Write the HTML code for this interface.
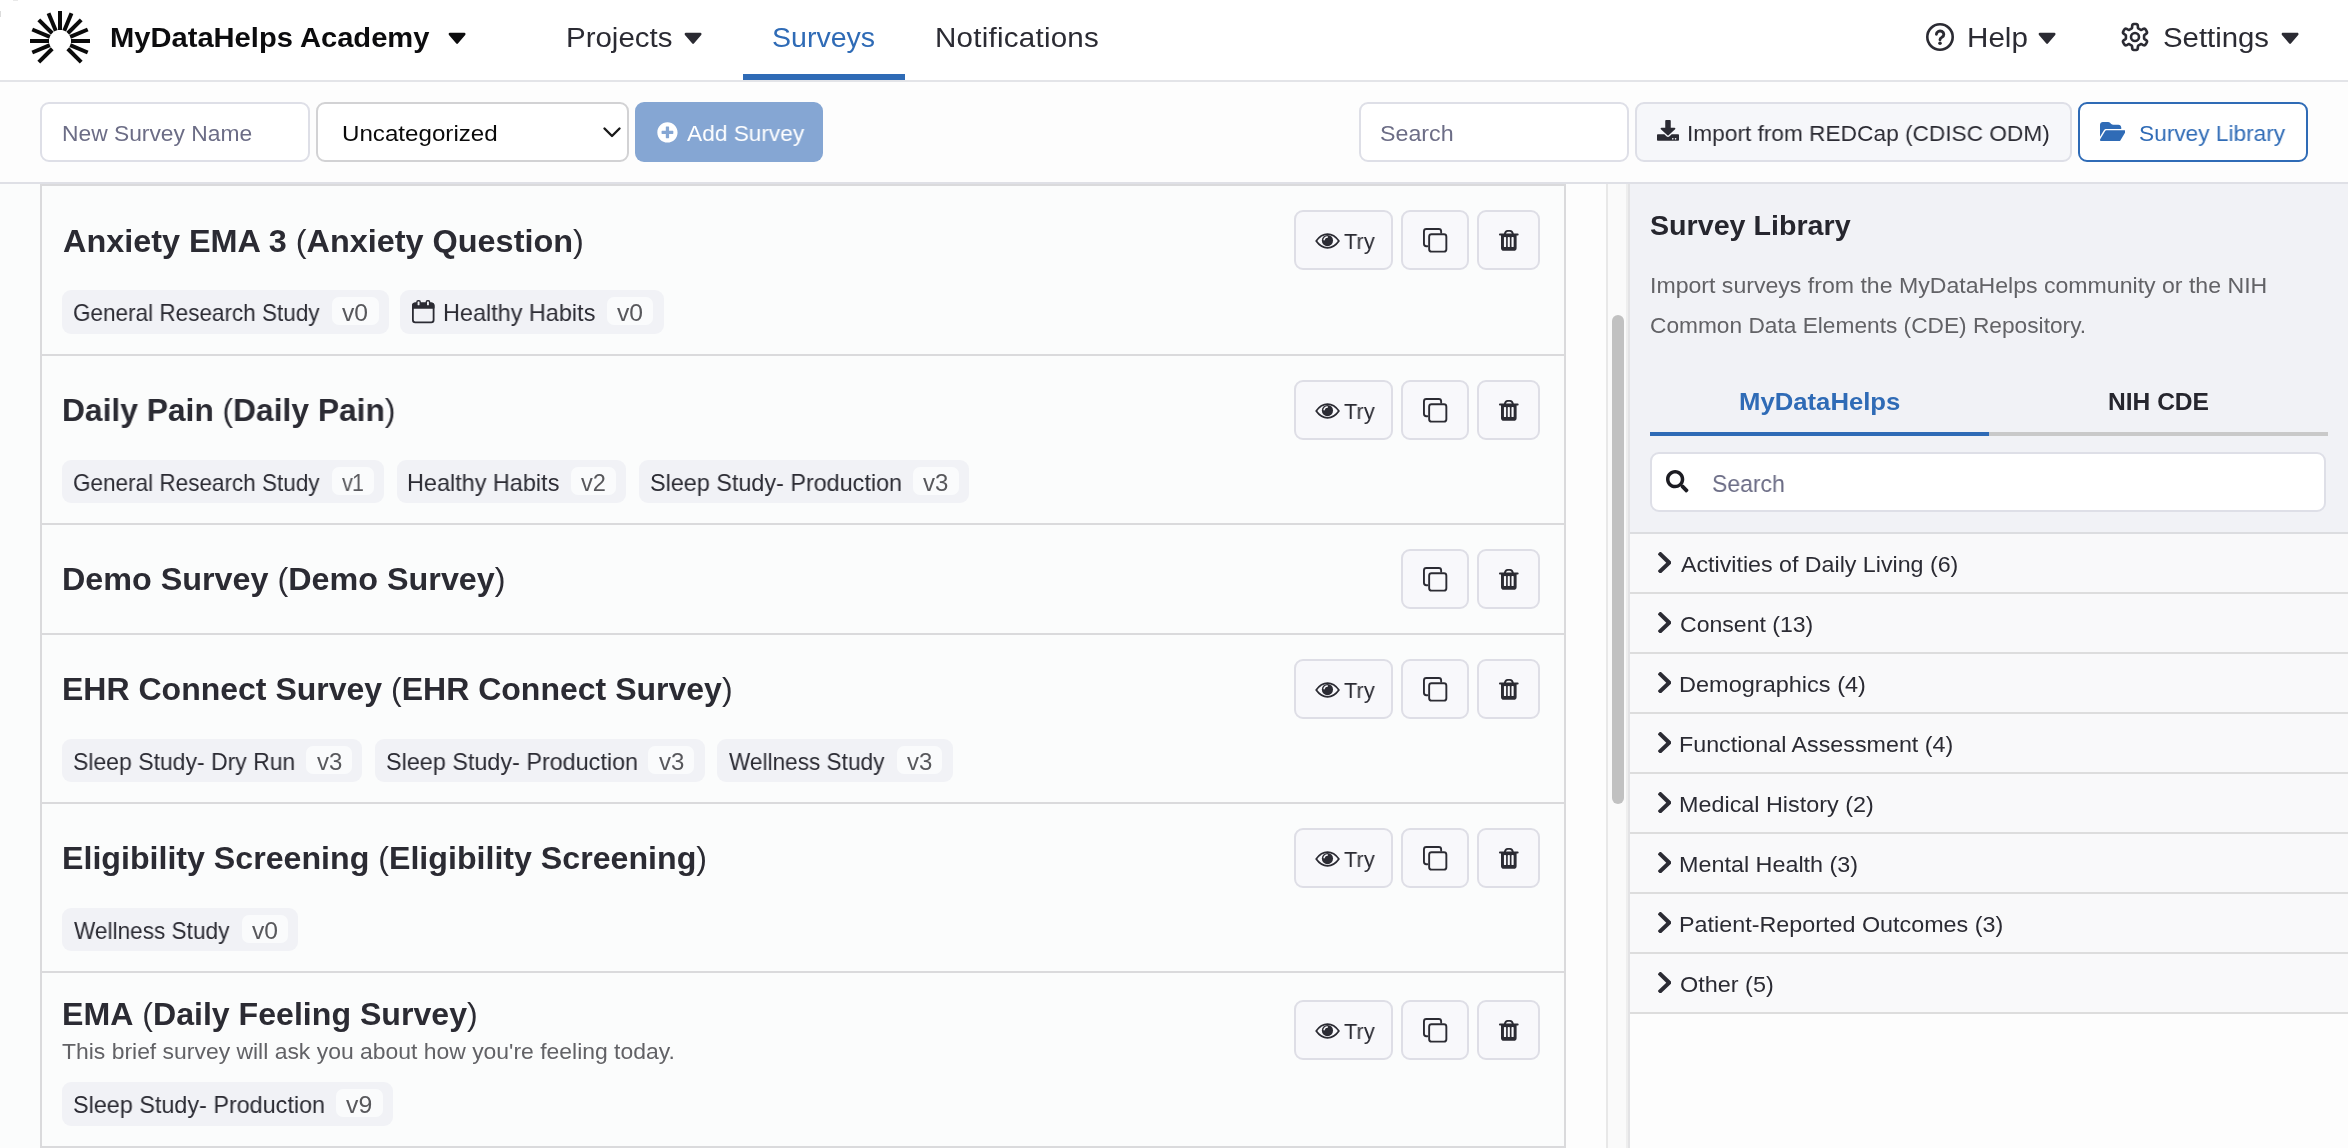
<!DOCTYPE html>
<html lang="en"><head><meta charset="utf-8"><title>Surveys - MyDataHelps Academy</title><style>html,body{margin:0;padding:0}body{width:2348px;height:1148px;position:relative;overflow:hidden;background:#fbfcfc;font-family:"Liberation Sans",sans-serif}
body>div,body>svg,body>span{position:absolute;display:block}body>span{white-space:nowrap;will-change:transform;transform-origin:0 0}b{font-weight:700}</style></head><body>
<div style="left:0px;top:0px;width:2348px;height:80px;background:#fff"></div>
<div style="left:0px;top:80px;width:2348px;height:2px;background:#e3e4e8"></div>
<div style="left:0px;top:82px;width:2348px;height:100px;background:#fdfdfd"></div>
<div style="left:0px;top:182px;width:2348px;height:2px;background:#dfe0e6"></div>
<div style="left:13px;top:0px;width:5px;height:1px;background:#e9e9e9"></div>
<div style="left:0px;top:11px;width:1px;height:6px;background:#dcdcdc"></div>
<div style="left:743px;top:74px;width:162px;height:6px;background:#2f6bb6"></div>
<svg style="left:0px;top:0px" width="120" height="80" viewBox="0 0 120 80"><g stroke="#0b0b0b" stroke-width="4" stroke-linecap="butt"><line x1="52.22" y1="48.78" x2="38.79" y2="62.21"/><line x1="49.84" y1="45.21" x2="32.28" y2="52.48"/><line x1="49.00" y1="41.00" x2="30.00" y2="41.00"/><line x1="49.84" y1="36.79" x2="32.28" y2="29.52"/><line x1="52.22" y1="33.22" x2="38.79" y2="19.79"/><line x1="55.79" y1="30.84" x2="48.52" y2="13.28"/><line x1="60.00" y1="30.00" x2="60.00" y2="11.00"/><line x1="64.21" y1="30.84" x2="71.48" y2="13.28"/><line x1="67.78" y1="33.22" x2="81.21" y2="19.79"/><line x1="70.16" y1="36.79" x2="87.72" y2="29.52"/><line x1="71.00" y1="41.00" x2="90.00" y2="41.00"/><line x1="70.16" y1="45.21" x2="87.72" y2="52.48"/><line x1="67.78" y1="48.78" x2="81.21" y2="62.21"/></g></svg>
<svg style="left:448px;top:20.25px" width="18.2" height="34" viewBox="0 0 320 512" preserveAspectRatio="none" fill="#0c0c0e"><path d="M31.3 192h257.3c17.8 0 26.7 21.5 14.1 34.1L174.1 354.8c-7.8 7.8-20.5 7.8-28.3 0L17.2 226.1C4.6 213.500 13.500 192 31.300 192z"/></svg>
<svg style="left:683.8px;top:20.25px" width="18.2" height="34" viewBox="0 0 320 512" preserveAspectRatio="none" fill="#2b2b33"><path d="M31.3 192h257.3c17.8 0 26.7 21.5 14.1 34.1L174.1 354.8c-7.8 7.8-20.5 7.8-28.3 0L17.2 226.1C4.6 213.500 13.500 192 31.300 192z"/></svg>
<svg style="left:2038px;top:20.25px" width="18.2" height="34" viewBox="0 0 320 512" preserveAspectRatio="none" fill="#2b2b33"><path d="M31.3 192h257.3c17.8 0 26.7 21.5 14.1 34.1L174.1 354.8c-7.8 7.8-20.5 7.8-28.3 0L17.2 226.1C4.6 213.500 13.500 192 31.300 192z"/></svg>
<svg style="left:2281px;top:20.25px" width="18.2" height="34" viewBox="0 0 320 512" preserveAspectRatio="none" fill="#2b2b33"><path d="M31.3 192h257.3c17.8 0 26.7 21.5 14.1 34.1L174.1 354.8c-7.8 7.8-20.5 7.8-28.3 0L17.2 226.1C4.6 213.500 13.500 192 31.300 192z"/></svg>
<svg style="left:1924px;top:21px" width="32" height="32" viewBox="0 0 32 32"><circle cx="16" cy="16" r="12.7" fill="none" stroke="#2b2b33" stroke-width="2.6"/><path d="M12.400 13.300a3.700 3.300 0 1 1 5.600 2.800c-1.400 0.900-2 1.500-2 2.700" fill="none" stroke="#2b2b33" stroke-width="2.900" stroke-linecap="round"/><circle cx="16" cy="22.300" r="1.800" fill="#2b2b33"/></svg>
<svg style="left:2119px;top:21px" width="32" height="32" viewBox="0 0 32 32"><path d="M25.10 16.00 L25.10 15.76 L25.09 15.52 L25.08 15.29 L25.07 15.05 L25.07 14.81 L25.09 14.56 L25.18 14.30 L25.41 14.00 L25.91 13.62 L26.67 13.14 L27.42 12.62 L27.87 12.14 L28.04 11.74 L28.04 11.38 L27.97 11.04 L27.86 10.72 L27.73 10.41 L27.58 10.10 L27.42 9.80 L27.26 9.50 L27.08 9.21 L26.90 8.92 L26.71 8.64 L26.50 8.37 L26.28 8.11 L26.02 7.88 L25.71 7.71 L25.27 7.65 L24.64 7.80 L23.81 8.19 L23.02 8.61 L22.44 8.85 L22.06 8.90 L21.79 8.85 L21.57 8.74 L21.36 8.62 L21.16 8.49 L20.96 8.37 L20.76 8.24 L20.55 8.12 L20.34 8.00 L20.13 7.89 L19.92 7.78 L19.71 7.67 L19.50 7.55 L19.30 7.41 L19.11 7.20 L18.97 6.85 L18.89 6.23 L18.86 5.33 L18.78 4.42 L18.59 3.79 L18.33 3.45 L18.02 3.26 L17.69 3.16 L17.36 3.09 L17.02 3.05 L16.68 3.02 L16.34 3.01 L16.00 3.00 L15.66 3.01 L15.32 3.02 L14.98 3.05 L14.64 3.09 L14.31 3.16 L13.98 3.26 L13.67 3.45 L13.41 3.79 L13.22 4.42 L13.14 5.33 L13.11 6.23 L13.03 6.85 L12.89 7.20 L12.70 7.41 L12.50 7.55 L12.29 7.67 L12.08 7.78 L11.87 7.89 L11.66 8.00 L11.45 8.12 L11.24 8.24 L11.04 8.37 L10.84 8.49 L10.64 8.62 L10.43 8.74 L10.21 8.85 L9.94 8.90 L9.56 8.85 L8.98 8.61 L8.19 8.19 L7.36 7.80 L6.73 7.65 L6.29 7.71 L5.98 7.88 L5.72 8.11 L5.50 8.37 L5.29 8.64 L5.10 8.92 L4.92 9.21 L4.74 9.50 L4.58 9.80 L4.42 10.10 L4.27 10.41 L4.14 10.72 L4.03 11.04 L3.96 11.38 L3.96 11.74 L4.13 12.14 L4.58 12.62 L5.33 13.14 L6.09 13.62 L6.59 14.00 L6.82 14.30 L6.91 14.56 L6.93 14.81 L6.93 15.05 L6.92 15.29 L6.91 15.52 L6.90 15.76 L6.90 16.00 L6.90 16.24 L6.91 16.48 L6.92 16.71 L6.93 16.95 L6.93 17.19 L6.91 17.44 L6.82 17.70 L6.59 18.00 L6.09 18.38 L5.33 18.86 L4.58 19.38 L4.13 19.86 L3.96 20.26 L3.96 20.62 L4.03 20.96 L4.14 21.28 L4.27 21.59 L4.42 21.90 L4.58 22.20 L4.74 22.50 L4.92 22.79 L5.10 23.08 L5.29 23.36 L5.50 23.63 L5.72 23.89 L5.98 24.12 L6.29 24.29 L6.73 24.35 L7.36 24.20 L8.19 23.81 L8.98 23.39 L9.56 23.15 L9.94 23.10 L10.21 23.15 L10.43 23.26 L10.64 23.38 L10.84 23.51 L11.04 23.63 L11.24 23.76 L11.45 23.88 L11.66 24.00 L11.87 24.11 L12.08 24.22 L12.29 24.33 L12.50 24.45 L12.70 24.59 L12.89 24.80 L13.03 25.15 L13.11 25.77 L13.14 26.67 L13.22 27.58 L13.41 28.21 L13.67 28.55 L13.98 28.74 L14.31 28.84 L14.64 28.91 L14.98 28.95 L15.32 28.98 L15.66 28.99 L16.00 29.00 L16.34 28.99 L16.68 28.98 L17.02 28.95 L17.36 28.91 L17.69 28.84 L18.02 28.74 L18.33 28.55 L18.59 28.21 L18.78 27.58 L18.86 26.67 L18.89 25.77 L18.97 25.15 L19.11 24.80 L19.30 24.59 L19.50 24.45 L19.71 24.33 L19.92 24.22 L20.13 24.11 L20.34 24.00 L20.55 23.88 L20.76 23.76 L20.96 23.63 L21.16 23.51 L21.36 23.38 L21.57 23.26 L21.79 23.15 L22.06 23.10 L22.44 23.15 L23.02 23.39 L23.81 23.81 L24.64 24.20 L25.27 24.35 L25.71 24.29 L26.02 24.12 L26.28 23.89 L26.50 23.63 L26.71 23.36 L26.90 23.08 L27.08 22.79 L27.26 22.50 L27.42 22.20 L27.58 21.90 L27.73 21.59 L27.86 21.28 L27.97 20.96 L28.04 20.62 L28.04 20.26 L27.87 19.86 L27.42 19.38 L26.67 18.86 L25.91 18.38 L25.41 18.00 L25.18 17.70 L25.09 17.44 L25.07 17.19 L25.07 16.95 L25.08 16.71 L25.09 16.48 L25.10 16.24Z" fill="none" stroke="#2b2b33" stroke-width="2.600" stroke-linejoin="round"/><circle cx="16" cy="16" r="4" fill="none" stroke="#2b2b33" stroke-width="2.600"/></svg>
<div style="left:40px;top:102px;width:270px;height:60px;border:2px solid #dedfe7;border-radius:9px;box-sizing:border-box;background:#fff"></div>
<div style="left:316px;top:102px;width:313px;height:60px;border:2px solid #d2d2d4;border-radius:9px;box-sizing:border-box;background:#fff"></div>
<svg style="left:602px;top:124px" width="20" height="16" viewBox="0 0 20 16"><path d="M2.500 4.500L10 12l7.500-7.500" fill="none" stroke="#1a1a1a" stroke-width="2.400" stroke-linecap="round" stroke-linejoin="round"/></svg>
<div style="left:635px;top:102px;width:188px;height:60px;background:#85a6d3;border-radius:9px"></div>
<svg style="left:656.9px;top:122.1px" width="20.9" height="20.9" viewBox="0 0 512 512" preserveAspectRatio="xMidYMid meet" fill="#fff"><path d="M256 8C119 8 8 119 8 256s111 248 248 248 248-111 248-248S393 8 256 8zm144 276c0 6.600-5.400 12-12 12h-92v92c0 6.600-5.400 12-12 12h-56c-6.600 0-12-5.400-12-12v-92h-92c-6.600 0-12-5.400-12-12v-56c0-6.600 5.400-12 12-12h92v-92c0-6.600 5.400-12 12-12h56c6.600 0 12 5.400 12 12v92h92c6.600 0 12 5.400 12 12v56z"/></svg>
<div style="left:1359px;top:102px;width:270px;height:60px;border:2px solid #dedfe7;border-radius:9px;box-sizing:border-box;background:#fff"></div>
<div style="left:1635px;top:102px;width:437px;height:60px;border:2px solid #dedfe7;border-radius:9px;box-sizing:border-box;background:#f6f7fa"></div>
<svg style="left:1657.1px;top:120.1px" width="22" height="20.8" viewBox="0 0 512 512" preserveAspectRatio="none" fill="#2b2b33"><path d="M216 0h80c13.300 0 24 10.700 24 24v168h87.700c17.800 0 26.700 21.500 14.100 34.100L269.700 378.300c-7.500 7.500-19.800 7.500-27.300 0L90.100 226.100c-12.600-12.600-3.700-34.100 14.100-34.100H192V24c0-13.300 10.700-24 24-24zm296 376v112c0 13.300-10.700 24-24 24H24c-13.300 0-24-10.700-24-24V376c0-13.300 10.700-24 24-24h146.700l49 49c20.100 20.100 52.500 20.100 72.600 0l49-49H488c13.300 0 24 10.700 24 24zm-124 88c0-11-9-20-20-20s-20 9-20 20 9 20 20 20 20-9 20-20zm64 0c0-11-9-20-20-20s-20 9-20 20 9 20 20 20 20-9 20-20z"/></svg>
<div style="left:2078px;top:102px;width:230px;height:60px;border:2px solid #2f6bb6;border-radius:9px;box-sizing:border-box;background:#fff"></div>
<svg style="left:2099.6px;top:121.8px" width="25.5" height="19.3" viewBox="0 32 576 448" preserveAspectRatio="none" fill="#2f6bb6"><path d="M88.700 223.800L0 375.800V96C0 60.700 28.700 32 64 32H181.500c17 0 33.300 6.700 45.300 18.700l26.500 26.500c12 12 28.300 18.700 45.300 18.700H416c35.300 0 64 28.700 64 64v32H144c-22.800 0-43.800 12.100-55.300 31.800zm27.600 16.100C122.100 230 132.600 224 144 224H544c11.500 0 22 6.100 27.700 16.100s5.700 22.200-.1 32.100l-112 192C453.900 474 443.400 480 432 480H32c-11.500 0-22-6.100-27.700-16.100s-5.700-22.200.1-32.100l112-192z"/></svg>
<div style="left:0px;top:184px;width:2348px;height:964px;background:#fbfcfc"></div>
<div style="left:40px;top:184px;width:1526px;height:2px;background:#dadadc"></div>
<div style="left:40px;top:184px;width:2px;height:964px;background:#dadadc"></div>
<div style="left:1564px;top:184px;width:2px;height:964px;background:#dadadc"></div>
<div style="left:1566px;top:184px;width:40px;height:964px;background:#fdfdfd"></div>
<div style="left:1606px;top:184px;width:2px;height:964px;background:#e8e8e8"></div>
<div style="left:1608px;top:184px;width:18px;height:964px;background:#fafafa"></div>
<div style="left:1612px;top:315px;width:12px;height:489px;background:#c1c1c1;border-radius:6px"></div>
<div style="left:1626px;top:184px;width:2px;height:964px;background:#eeeeee"></div>
<div style="left:1628px;top:184px;width:2px;height:964px;background:#e3e3e5"></div>
<div style="left:1630px;top:184px;width:718px;height:348px;background:#f1f2f6"></div>
<div style="left:1630px;top:532px;width:718px;height:2px;background:#dcdde0"></div>
<div style="left:1630px;top:1014px;width:718px;height:134px;background:#fdfdfd"></div>
<div style="left:1630px;top:534px;width:718px;height:58px;background:#f9f9fa"></div>
<div style="left:1630px;top:592px;width:718px;height:2px;background:#dddddd"></div>
<svg style="left:1657.9px;top:552px" width="13.6" height="21.3" viewBox="27.500 37.600 265 436.800" preserveAspectRatio="none" fill="#2b2b33"><path d="M285.476 272.971L91.132 467.314c-9.373 9.373-24.569 9.373-33.941 0l-22.667-22.667c-9.357-9.357-9.375-24.522-.04-33.901L188.505 256 34.484 101.255c-9.335-9.379-9.317-24.544.04-33.901l22.667-22.667c9.373-9.373 24.569-9.373 33.941 0L285.475 239.030c9.373 9.372 9.373 24.568.001 33.941z"/></svg>
<div style="left:1630px;top:594px;width:718px;height:58px;background:#f9f9fa"></div>
<div style="left:1630px;top:652px;width:718px;height:2px;background:#dddddd"></div>
<svg style="left:1657.9px;top:612px" width="13.6" height="21.3" viewBox="27.500 37.600 265 436.800" preserveAspectRatio="none" fill="#2b2b33"><path d="M285.476 272.971L91.132 467.314c-9.373 9.373-24.569 9.373-33.941 0l-22.667-22.667c-9.357-9.357-9.375-24.522-.04-33.901L188.505 256 34.484 101.255c-9.335-9.379-9.317-24.544.04-33.901l22.667-22.667c9.373-9.373 24.569-9.373 33.941 0L285.475 239.030c9.373 9.372 9.373 24.568.001 33.941z"/></svg>
<div style="left:1630px;top:654px;width:718px;height:58px;background:#f9f9fa"></div>
<div style="left:1630px;top:712px;width:718px;height:2px;background:#dddddd"></div>
<svg style="left:1657.9px;top:672px" width="13.6" height="21.3" viewBox="27.500 37.600 265 436.800" preserveAspectRatio="none" fill="#2b2b33"><path d="M285.476 272.971L91.132 467.314c-9.373 9.373-24.569 9.373-33.941 0l-22.667-22.667c-9.357-9.357-9.375-24.522-.04-33.901L188.505 256 34.484 101.255c-9.335-9.379-9.317-24.544.04-33.901l22.667-22.667c9.373-9.373 24.569-9.373 33.941 0L285.475 239.030c9.373 9.372 9.373 24.568.001 33.941z"/></svg>
<div style="left:1630px;top:714px;width:718px;height:58px;background:#f9f9fa"></div>
<div style="left:1630px;top:772px;width:718px;height:2px;background:#dddddd"></div>
<svg style="left:1657.9px;top:732px" width="13.6" height="21.3" viewBox="27.500 37.600 265 436.800" preserveAspectRatio="none" fill="#2b2b33"><path d="M285.476 272.971L91.132 467.314c-9.373 9.373-24.569 9.373-33.941 0l-22.667-22.667c-9.357-9.357-9.375-24.522-.04-33.901L188.505 256 34.484 101.255c-9.335-9.379-9.317-24.544.04-33.901l22.667-22.667c9.373-9.373 24.569-9.373 33.941 0L285.475 239.030c9.373 9.372 9.373 24.568.001 33.941z"/></svg>
<div style="left:1630px;top:774px;width:718px;height:58px;background:#f9f9fa"></div>
<div style="left:1630px;top:832px;width:718px;height:2px;background:#dddddd"></div>
<svg style="left:1657.9px;top:792px" width="13.6" height="21.3" viewBox="27.500 37.600 265 436.800" preserveAspectRatio="none" fill="#2b2b33"><path d="M285.476 272.971L91.132 467.314c-9.373 9.373-24.569 9.373-33.941 0l-22.667-22.667c-9.357-9.357-9.375-24.522-.04-33.901L188.505 256 34.484 101.255c-9.335-9.379-9.317-24.544.04-33.901l22.667-22.667c9.373-9.373 24.569-9.373 33.941 0L285.475 239.030c9.373 9.372 9.373 24.568.001 33.941z"/></svg>
<div style="left:1630px;top:834px;width:718px;height:58px;background:#f9f9fa"></div>
<div style="left:1630px;top:892px;width:718px;height:2px;background:#dddddd"></div>
<svg style="left:1657.9px;top:852px" width="13.6" height="21.3" viewBox="27.500 37.600 265 436.800" preserveAspectRatio="none" fill="#2b2b33"><path d="M285.476 272.971L91.132 467.314c-9.373 9.373-24.569 9.373-33.941 0l-22.667-22.667c-9.357-9.357-9.375-24.522-.04-33.901L188.505 256 34.484 101.255c-9.335-9.379-9.317-24.544.04-33.901l22.667-22.667c9.373-9.373 24.569-9.373 33.941 0L285.475 239.030c9.373 9.372 9.373 24.568.001 33.941z"/></svg>
<div style="left:1630px;top:894px;width:718px;height:58px;background:#f9f9fa"></div>
<div style="left:1630px;top:952px;width:718px;height:2px;background:#dddddd"></div>
<svg style="left:1657.9px;top:912px" width="13.6" height="21.3" viewBox="27.500 37.600 265 436.800" preserveAspectRatio="none" fill="#2b2b33"><path d="M285.476 272.971L91.132 467.314c-9.373 9.373-24.569 9.373-33.941 0l-22.667-22.667c-9.357-9.357-9.375-24.522-.04-33.901L188.505 256 34.484 101.255c-9.335-9.379-9.317-24.544.04-33.901l22.667-22.667c9.373-9.373 24.569-9.373 33.941 0L285.475 239.030c9.373 9.372 9.373 24.568.001 33.941z"/></svg>
<div style="left:1630px;top:954px;width:718px;height:58px;background:#f9f9fa"></div>
<div style="left:1630px;top:1012px;width:718px;height:2px;background:#dddddd"></div>
<svg style="left:1657.9px;top:972px" width="13.6" height="21.3" viewBox="27.500 37.600 265 436.800" preserveAspectRatio="none" fill="#2b2b33"><path d="M285.476 272.971L91.132 467.314c-9.373 9.373-24.569 9.373-33.941 0l-22.667-22.667c-9.357-9.357-9.375-24.522-.04-33.901L188.505 256 34.484 101.255c-9.335-9.379-9.317-24.544.04-33.901l22.667-22.667c9.373-9.373 24.569-9.373 33.941 0L285.475 239.030c9.373 9.372 9.373 24.568.001 33.941z"/></svg>
<div style="left:1650px;top:432px;width:339px;height:4px;background:#2f6bb6"></div>
<div style="left:1989px;top:432px;width:339px;height:4px;background:#c9c9c9"></div>
<div style="left:1650px;top:452px;width:676px;height:60px;border:2px solid #dedfe7;border-radius:9px;box-sizing:border-box;background:#fff"></div>
<svg style="left:1666px;top:470px" width="22.5" height="22.5" viewBox="0 0 512 512" preserveAspectRatio="xMidYMid meet" fill="#1c1c22"><path d="M505 442.7L405.3 343c-4.5-4.5-10.6-7-17-7H372c27.6-35.3 44-79.7 44-128C416 93.1 322.9 0 208 0S0 93.1 0 208s93.100 208 208 208c48.300 0 92.700-16.400 128-44v16.300c0 6.400 2.500 12.500 7 17l99.700 99.700c9.400 9.400 24.600 9.400 33.900 0l28.300-28.300c9.400-9.400 9.400-24.600.100-34zM208 336c-70.700 0-128-57.200-128-128 0-70.700 57.200-128 128-128 70.700 0 128 57.200 128 128 0 70.700-57.200 128-128 128z"/></svg>
<div style="left:42px;top:354px;width:1522px;height:2px;background:#dadadc"></div>
<div style="left:1294px;top:210px;width:99px;height:60px;border:2px solid #dedee6;border-radius:9px;box-sizing:border-box;background:#f8f8fb"></div>
<svg style="left:1308px;top:222px" width="40" height="36" viewBox="0 0 40 36"><path d="M8.200 19C11.300 14.600 15 12.150 19.550 12.150S27.800 14.600 30.900 19C27.800 23.400 24.100 25.800 19.550 25.800S11.300 23.400 8.200 19Z" fill="none" stroke="#2b2b33" stroke-width="1.750" stroke-linejoin="round"/><circle cx="19.450" cy="18.550" r="5.600" fill="#2b2b33"/><path d="M16.100 17.700A3.500 3.500 0 0 1 19.300 14.950" fill="none" stroke="#f8f8fb" stroke-width="1.500" stroke-linecap="round"/></svg>
<div style="left:1401px;top:210px;width:68px;height:60px;border:2px solid #dedee6;border-radius:9px;box-sizing:border-box;background:#f8f8fb"></div>
<svg style="left:1415px;top:222px" width="40" height="36" viewBox="0 0 40 36"><g fill="none" stroke="#2b2b33" stroke-width="1.900" stroke-linecap="round" stroke-linejoin="round"><path d="M12.400 24.250H11.350a2.400 2.400 0 0 1-2.400-2.400V9.450a2.400 2.400 0 0 1 2.400-2.400H23.750a2.400 2.400 0 0 1 2.400 2.400V10.700"/><rect x="14.150" y="12.250" width="17.200" height="17.400" rx="2.400"/></g></svg>
<div style="left:1477px;top:210px;width:63px;height:60px;border:2px solid #dedee6;border-radius:9px;box-sizing:border-box;background:#f8f8fb"></div>
<svg style="left:1490px;top:222px" width="40" height="36" viewBox="0 0 40 36"><path d="M11 12.500H26.600V25.900a2.800 2.800 0 0 1-2.800 2.800H13.800a2.800 2.800 0 0 1-2.800-2.800Z" fill="#2b2b33"/><g fill="#f8f8fb"><rect x="13.950" y="15" width="2.150" height="10.100" rx="0.700"/><rect x="17.750" y="15" width="2.100" height="10.100" rx="0.700"/><rect x="21.500" y="15" width="2.150" height="10.100" rx="0.700"/></g><g fill="none" stroke="#2b2b33" stroke-width="1.900" stroke-linecap="round"><path d="M9.900 12.450H27.700"/><path d="M14.800 12.200C15.300 9.300 16.200 8.900 17.700 8.900H20C21.500 8.900 22.400 9.300 22.900 12.200"/></g></svg>
<div style="left:62.0px;top:290px;width:326.5px;height:43.5px;background:#f1f2f6;border-radius:9px"></div>
<div style="left:332.0px;top:297px;width:46.5px;height:28px;background:#fafbfc;border-radius:7px"></div>
<div style="left:400.0px;top:290px;width:263.5px;height:43.5px;background:#f1f2f6;border-radius:9px"></div>
<svg style="left:410.4px;top:297.6px" width="26" height="28" viewBox="0 0 26 28"><rect x="2.900" y="5.400" width="20.700" height="18.900" rx="2.300" fill="none" stroke="#2b2b33" stroke-width="1.800"/><path d="M2.900 9.800V7.700a2.300 2.300 0 0 1 2.300-2.300H21.300a2.300 2.300 0 0 1 2.300 2.300V9.800Z" fill="#2b2b33" stroke="#2b2b33" stroke-width="1.800" stroke-linejoin="round"/><g fill="#f1f2f6" stroke="#2b2b33" stroke-width="1.400"><rect x="6.900" y="2.700" width="3.300" height="5.300" rx="1.200"/><rect x="16.300" y="2.700" width="3.300" height="5.300" rx="1.200"/></g></svg>
<div style="left:606.5px;top:297px;width:46.5px;height:28px;background:#fafbfc;border-radius:7px"></div>
<div style="left:42px;top:523px;width:1522px;height:2px;background:#dadadc"></div>
<div style="left:1294px;top:380px;width:99px;height:60px;border:2px solid #dedee6;border-radius:9px;box-sizing:border-box;background:#f8f8fb"></div>
<svg style="left:1308px;top:392px" width="40" height="36" viewBox="0 0 40 36"><path d="M8.200 19C11.300 14.600 15 12.150 19.550 12.150S27.800 14.600 30.900 19C27.800 23.400 24.100 25.800 19.550 25.800S11.300 23.400 8.200 19Z" fill="none" stroke="#2b2b33" stroke-width="1.750" stroke-linejoin="round"/><circle cx="19.450" cy="18.550" r="5.600" fill="#2b2b33"/><path d="M16.100 17.700A3.500 3.500 0 0 1 19.300 14.950" fill="none" stroke="#f8f8fb" stroke-width="1.500" stroke-linecap="round"/></svg>
<div style="left:1401px;top:380px;width:68px;height:60px;border:2px solid #dedee6;border-radius:9px;box-sizing:border-box;background:#f8f8fb"></div>
<svg style="left:1415px;top:392px" width="40" height="36" viewBox="0 0 40 36"><g fill="none" stroke="#2b2b33" stroke-width="1.900" stroke-linecap="round" stroke-linejoin="round"><path d="M12.400 24.250H11.350a2.400 2.400 0 0 1-2.400-2.400V9.450a2.400 2.400 0 0 1 2.400-2.400H23.750a2.400 2.400 0 0 1 2.400 2.400V10.700"/><rect x="14.150" y="12.250" width="17.200" height="17.400" rx="2.400"/></g></svg>
<div style="left:1477px;top:380px;width:63px;height:60px;border:2px solid #dedee6;border-radius:9px;box-sizing:border-box;background:#f8f8fb"></div>
<svg style="left:1490px;top:392px" width="40" height="36" viewBox="0 0 40 36"><path d="M11 12.500H26.600V25.900a2.800 2.800 0 0 1-2.800 2.800H13.800a2.800 2.800 0 0 1-2.800-2.800Z" fill="#2b2b33"/><g fill="#f8f8fb"><rect x="13.950" y="15" width="2.150" height="10.100" rx="0.700"/><rect x="17.750" y="15" width="2.100" height="10.100" rx="0.700"/><rect x="21.500" y="15" width="2.150" height="10.100" rx="0.700"/></g><g fill="none" stroke="#2b2b33" stroke-width="1.900" stroke-linecap="round"><path d="M9.900 12.450H27.700"/><path d="M14.800 12.200C15.300 9.300 16.200 8.900 17.700 8.900H20C21.500 8.900 22.400 9.300 22.900 12.200"/></g></svg>
<div style="left:62.0px;top:459.5px;width:322.0px;height:43.5px;background:#f1f2f6;border-radius:9px"></div>
<div style="left:332.0px;top:466.5px;width:42.0px;height:28px;background:#fafbfc;border-radius:7px"></div>
<div style="left:397.0px;top:459.5px;width:229.0px;height:43.5px;background:#f1f2f6;border-radius:9px"></div>
<div style="left:570.5px;top:466.5px;width:45.0px;height:28px;background:#fafbfc;border-radius:7px"></div>
<div style="left:639.0px;top:459.5px;width:330.0px;height:43.5px;background:#f1f2f6;border-radius:9px"></div>
<div style="left:913.0px;top:466.5px;width:45.5px;height:28px;background:#fafbfc;border-radius:7px"></div>
<div style="left:42px;top:633px;width:1522px;height:2px;background:#dadadc"></div>
<div style="left:1401px;top:549px;width:68px;height:60px;border:2px solid #dedee6;border-radius:9px;box-sizing:border-box;background:#f8f8fb"></div>
<svg style="left:1415px;top:561px" width="40" height="36" viewBox="0 0 40 36"><g fill="none" stroke="#2b2b33" stroke-width="1.900" stroke-linecap="round" stroke-linejoin="round"><path d="M12.400 24.250H11.350a2.400 2.400 0 0 1-2.400-2.400V9.450a2.400 2.400 0 0 1 2.400-2.400H23.750a2.400 2.400 0 0 1 2.400 2.400V10.700"/><rect x="14.150" y="12.250" width="17.200" height="17.400" rx="2.400"/></g></svg>
<div style="left:1477px;top:549px;width:63px;height:60px;border:2px solid #dedee6;border-radius:9px;box-sizing:border-box;background:#f8f8fb"></div>
<svg style="left:1490px;top:561px" width="40" height="36" viewBox="0 0 40 36"><path d="M11 12.500H26.600V25.900a2.800 2.800 0 0 1-2.800 2.800H13.800a2.800 2.800 0 0 1-2.800-2.800Z" fill="#2b2b33"/><g fill="#f8f8fb"><rect x="13.950" y="15" width="2.150" height="10.100" rx="0.700"/><rect x="17.750" y="15" width="2.100" height="10.100" rx="0.700"/><rect x="21.500" y="15" width="2.150" height="10.100" rx="0.700"/></g><g fill="none" stroke="#2b2b33" stroke-width="1.900" stroke-linecap="round"><path d="M9.900 12.450H27.700"/><path d="M14.800 12.200C15.300 9.300 16.200 8.900 17.700 8.900H20C21.500 8.900 22.400 9.300 22.900 12.200"/></g></svg>
<div style="left:42px;top:802px;width:1522px;height:2px;background:#dadadc"></div>
<div style="left:1294px;top:659px;width:99px;height:60px;border:2px solid #dedee6;border-radius:9px;box-sizing:border-box;background:#f8f8fb"></div>
<svg style="left:1308px;top:671px" width="40" height="36" viewBox="0 0 40 36"><path d="M8.200 19C11.300 14.600 15 12.150 19.550 12.150S27.800 14.600 30.900 19C27.800 23.400 24.100 25.800 19.550 25.800S11.300 23.400 8.200 19Z" fill="none" stroke="#2b2b33" stroke-width="1.750" stroke-linejoin="round"/><circle cx="19.450" cy="18.550" r="5.600" fill="#2b2b33"/><path d="M16.100 17.700A3.500 3.500 0 0 1 19.300 14.950" fill="none" stroke="#f8f8fb" stroke-width="1.500" stroke-linecap="round"/></svg>
<div style="left:1401px;top:659px;width:68px;height:60px;border:2px solid #dedee6;border-radius:9px;box-sizing:border-box;background:#f8f8fb"></div>
<svg style="left:1415px;top:671px" width="40" height="36" viewBox="0 0 40 36"><g fill="none" stroke="#2b2b33" stroke-width="1.900" stroke-linecap="round" stroke-linejoin="round"><path d="M12.400 24.250H11.350a2.400 2.400 0 0 1-2.400-2.400V9.450a2.400 2.400 0 0 1 2.400-2.400H23.750a2.400 2.400 0 0 1 2.400 2.400V10.700"/><rect x="14.150" y="12.250" width="17.200" height="17.400" rx="2.400"/></g></svg>
<div style="left:1477px;top:659px;width:63px;height:60px;border:2px solid #dedee6;border-radius:9px;box-sizing:border-box;background:#f8f8fb"></div>
<svg style="left:1490px;top:671px" width="40" height="36" viewBox="0 0 40 36"><path d="M11 12.500H26.600V25.900a2.800 2.800 0 0 1-2.800 2.800H13.800a2.800 2.800 0 0 1-2.800-2.800Z" fill="#2b2b33"/><g fill="#f8f8fb"><rect x="13.950" y="15" width="2.150" height="10.100" rx="0.700"/><rect x="17.750" y="15" width="2.100" height="10.100" rx="0.700"/><rect x="21.500" y="15" width="2.150" height="10.100" rx="0.700"/></g><g fill="none" stroke="#2b2b33" stroke-width="1.900" stroke-linecap="round"><path d="M9.900 12.450H27.700"/><path d="M14.800 12.200C15.300 9.300 16.200 8.900 17.700 8.900H20C21.500 8.900 22.400 9.300 22.900 12.200"/></g></svg>
<div style="left:62.0px;top:738.5px;width:300.0px;height:43.5px;background:#f1f2f6;border-radius:9px"></div>
<div style="left:306.0px;top:745.5px;width:45.5px;height:28px;background:#fafbfc;border-radius:7px"></div>
<div style="left:374.5px;top:738.5px;width:330.0px;height:43.5px;background:#f1f2f6;border-radius:9px"></div>
<div style="left:648.0px;top:745.5px;width:45.5px;height:28px;background:#fafbfc;border-radius:7px"></div>
<div style="left:717.0px;top:738.5px;width:235.5px;height:43.5px;background:#f1f2f6;border-radius:9px"></div>
<div style="left:896.5px;top:745.5px;width:45.5px;height:28px;background:#fafbfc;border-radius:7px"></div>
<div style="left:42px;top:971px;width:1522px;height:2px;background:#dadadc"></div>
<div style="left:1294px;top:828px;width:99px;height:60px;border:2px solid #dedee6;border-radius:9px;box-sizing:border-box;background:#f8f8fb"></div>
<svg style="left:1308px;top:840px" width="40" height="36" viewBox="0 0 40 36"><path d="M8.200 19C11.300 14.600 15 12.150 19.550 12.150S27.800 14.600 30.900 19C27.800 23.400 24.100 25.800 19.550 25.800S11.300 23.400 8.200 19Z" fill="none" stroke="#2b2b33" stroke-width="1.750" stroke-linejoin="round"/><circle cx="19.450" cy="18.550" r="5.600" fill="#2b2b33"/><path d="M16.100 17.700A3.500 3.500 0 0 1 19.300 14.950" fill="none" stroke="#f8f8fb" stroke-width="1.500" stroke-linecap="round"/></svg>
<div style="left:1401px;top:828px;width:68px;height:60px;border:2px solid #dedee6;border-radius:9px;box-sizing:border-box;background:#f8f8fb"></div>
<svg style="left:1415px;top:840px" width="40" height="36" viewBox="0 0 40 36"><g fill="none" stroke="#2b2b33" stroke-width="1.900" stroke-linecap="round" stroke-linejoin="round"><path d="M12.400 24.250H11.350a2.400 2.400 0 0 1-2.400-2.400V9.450a2.400 2.400 0 0 1 2.400-2.400H23.750a2.400 2.400 0 0 1 2.400 2.400V10.700"/><rect x="14.150" y="12.250" width="17.200" height="17.400" rx="2.400"/></g></svg>
<div style="left:1477px;top:828px;width:63px;height:60px;border:2px solid #dedee6;border-radius:9px;box-sizing:border-box;background:#f8f8fb"></div>
<svg style="left:1490px;top:840px" width="40" height="36" viewBox="0 0 40 36"><path d="M11 12.500H26.600V25.900a2.800 2.800 0 0 1-2.800 2.800H13.800a2.800 2.800 0 0 1-2.800-2.800Z" fill="#2b2b33"/><g fill="#f8f8fb"><rect x="13.950" y="15" width="2.150" height="10.100" rx="0.700"/><rect x="17.750" y="15" width="2.100" height="10.100" rx="0.700"/><rect x="21.500" y="15" width="2.150" height="10.100" rx="0.700"/></g><g fill="none" stroke="#2b2b33" stroke-width="1.900" stroke-linecap="round"><path d="M9.900 12.450H27.700"/><path d="M14.800 12.200C15.300 9.300 16.200 8.900 17.700 8.900H20C21.500 8.900 22.400 9.300 22.900 12.200"/></g></svg>
<div style="left:62.0px;top:907.5px;width:236.0px;height:43.5px;background:#f1f2f6;border-radius:9px"></div>
<div style="left:241.5px;top:914.5px;width:46.5px;height:28px;background:#fafbfc;border-radius:7px"></div>
<div style="left:42px;top:1145.5px;width:1522px;height:2px;background:#dadadc"></div>
<div style="left:1294px;top:1000px;width:99px;height:60px;border:2px solid #dedee6;border-radius:9px;box-sizing:border-box;background:#f8f8fb"></div>
<svg style="left:1308px;top:1012px" width="40" height="36" viewBox="0 0 40 36"><path d="M8.200 19C11.300 14.600 15 12.150 19.550 12.150S27.800 14.600 30.900 19C27.800 23.400 24.100 25.800 19.550 25.800S11.300 23.400 8.200 19Z" fill="none" stroke="#2b2b33" stroke-width="1.750" stroke-linejoin="round"/><circle cx="19.450" cy="18.550" r="5.600" fill="#2b2b33"/><path d="M16.100 17.700A3.500 3.500 0 0 1 19.300 14.950" fill="none" stroke="#f8f8fb" stroke-width="1.500" stroke-linecap="round"/></svg>
<div style="left:1401px;top:1000px;width:68px;height:60px;border:2px solid #dedee6;border-radius:9px;box-sizing:border-box;background:#f8f8fb"></div>
<svg style="left:1415px;top:1012px" width="40" height="36" viewBox="0 0 40 36"><g fill="none" stroke="#2b2b33" stroke-width="1.900" stroke-linecap="round" stroke-linejoin="round"><path d="M12.400 24.250H11.350a2.400 2.400 0 0 1-2.400-2.400V9.450a2.400 2.400 0 0 1 2.400-2.400H23.750a2.400 2.400 0 0 1 2.400 2.400V10.700"/><rect x="14.150" y="12.250" width="17.200" height="17.400" rx="2.400"/></g></svg>
<div style="left:1477px;top:1000px;width:63px;height:60px;border:2px solid #dedee6;border-radius:9px;box-sizing:border-box;background:#f8f8fb"></div>
<svg style="left:1490px;top:1012px" width="40" height="36" viewBox="0 0 40 36"><path d="M11 12.500H26.600V25.900a2.800 2.800 0 0 1-2.800 2.800H13.800a2.800 2.800 0 0 1-2.800-2.800Z" fill="#2b2b33"/><g fill="#f8f8fb"><rect x="13.950" y="15" width="2.150" height="10.100" rx="0.700"/><rect x="17.750" y="15" width="2.100" height="10.100" rx="0.700"/><rect x="21.500" y="15" width="2.150" height="10.100" rx="0.700"/></g><g fill="none" stroke="#2b2b33" stroke-width="1.900" stroke-linecap="round"><path d="M9.900 12.450H27.700"/><path d="M14.800 12.200C15.300 9.300 16.200 8.900 17.700 8.900H20C21.500 8.900 22.400 9.300 22.900 12.200"/></g></svg>
<div style="left:62.0px;top:1082px;width:330.5px;height:43.5px;background:#f1f2f6;border-radius:9px"></div>
<div style="left:336.0px;top:1089px;width:46.5px;height:28px;background:#fafbfc;border-radius:7px"></div>
<span style="left:109.97px;top:21.00px;font:700 28px/34px 'Liberation Sans', sans-serif;color:#0c0c0e;transform:scaleX(1.0402)">MyDataHelps Academy</span>
<span style="left:566.10px;top:20.80px;font:400 27.5px/33px 'Liberation Sans', sans-serif;color:#2b2b33;transform:scaleX(1.0719)">Projects</span>
<span style="left:772.22px;top:20.80px;font:400 27.5px/33px 'Liberation Sans', sans-serif;color:#2f6bb6;transform:scaleX(1.0371)">Surveys</span>
<span style="left:934.79px;top:21.00px;font:400 27.5px/33px 'Liberation Sans', sans-serif;letter-spacing:0.216px;color:#2b2b33;transform:scaleX(1.0750)">Notifications</span>
<span style="left:1966.89px;top:21.00px;font:400 27.5px/33px 'Liberation Sans', sans-serif;letter-spacing:0.039px;color:#2b2b33;transform:scaleX(1.0750)">Help</span>
<span style="left:2163.48px;top:21.00px;font:400 27.5px/33px 'Liberation Sans', sans-serif;color:#2b2b33;transform:scaleX(1.0670)">Settings</span>
<span style="left:61.53px;top:118.70px;font:400 22.8px/28px 'Liberation Sans', sans-serif;color:#6c6d86;transform:scaleX(1.0004)">New Survey Name</span>
<span style="left:341.73px;top:118.70px;font:400 22.8px/28px 'Liberation Sans', sans-serif;color:#0a0a0a;transform:scaleX(1.0590)">Uncategorized</span>
<span style="left:687.40px;top:118.80px;font:400 22.8px/28px 'Liberation Sans', sans-serif;color:#ffffff;transform:scaleX(0.9943)">Add Survey</span>
<span style="left:1380.38px;top:118.70px;font:400 22.8px/28px 'Liberation Sans', sans-serif;color:#6c6d86;transform:scaleX(1.0186)">Search</span>
<span style="left:1687.01px;top:118.70px;font:400 22.8px/28px 'Liberation Sans', sans-serif;color:#2b2b33;transform:scaleX(0.9944)">Import from REDCap (CDISC ODM)</span>
<span style="left:2139.01px;top:118.70px;font:400 22.8px/28px 'Liberation Sans', sans-serif;color:#2f6bb6;transform:scaleX(0.9945)">Survey Library</span>
<span style="left:1680.90px;top:549.50px;font:400 22.8px/28px 'Liberation Sans', sans-serif;color:#2b2b33;transform:scaleX(1.0181)">Activities of Daily Living (6)</span>
<span style="left:1679.89px;top:609.50px;font:400 22.8px/28px 'Liberation Sans', sans-serif;color:#2b2b33;transform:scaleX(1.0113)">Consent (13)</span>
<span style="left:1679.18px;top:669.50px;font:400 22.8px/28px 'Liberation Sans', sans-serif;color:#2b2b33;transform:scaleX(1.0315)">Demographics (4)</span>
<span style="left:1679.20px;top:729.50px;font:400 22.8px/28px 'Liberation Sans', sans-serif;color:#2b2b33;transform:scaleX(1.0208)">Functional Assessment (4)</span>
<span style="left:1679.19px;top:789.50px;font:400 22.8px/28px 'Liberation Sans', sans-serif;color:#2b2b33;transform:scaleX(1.0246)">Medical History (2)</span>
<span style="left:1679.19px;top:849.50px;font:400 22.8px/28px 'Liberation Sans', sans-serif;color:#2b2b33;transform:scaleX(1.0241)">Mental Health (3)</span>
<span style="left:1679.19px;top:909.50px;font:400 22.8px/28px 'Liberation Sans', sans-serif;color:#2b2b33;transform:scaleX(1.0237)">Patient-Reported Outcomes (3)</span>
<span style="left:1679.87px;top:969.50px;font:400 22.8px/28px 'Liberation Sans', sans-serif;color:#2b2b33;transform:scaleX(1.0274)">Other (5)</span>
<span style="left:1650.19px;top:208.20px;font:700 28.4px/35px 'Liberation Sans', sans-serif;color:#26262e;transform:scaleX(1.0088)">Survey Library</span>
<span style="left:1649.75px;top:271.70px;font:400 22.5px/27px 'Liberation Sans', sans-serif;color:#626266;transform:scaleX(1.0263)">Import surveys from the MyDataHelps community or the NIH</span>
<span style="left:1650.19px;top:311.70px;font:400 22.5px/27px 'Liberation Sans', sans-serif;color:#626266;transform:scaleX(1.0090)">Common Data Elements (CDE) Repository.</span>
<span style="left:1738.85px;top:387.20px;font:700 24.5px/30px 'Liberation Sans', sans-serif;color:#2f6bb6;transform:scaleX(1.0487)">MyDataHelps</span>
<span style="left:2108.03px;top:387.20px;font:700 24.5px/30px 'Liberation Sans', sans-serif;color:#26262e;transform:scaleX(1.0027)">NIH CDE</span>
<span style="left:1711.85px;top:469.30px;font:400 24.3px/30px 'Liberation Sans', sans-serif;color:#6c6d86;transform:scaleX(0.9457)">Search</span>
<span style="left:62.53px;top:221.90px;font:400 32px/39px 'Liberation Sans', sans-serif;color:#2b2b33;transform:scaleX(1.0123)"><b>Anxiety EMA 3</b> (<b>Anxiety Question</b>)</span>
<span style="left:1343.88px;top:226.80px;font:400 22.8px/28px 'Liberation Sans', sans-serif;color:#2b2b33;transform:scaleX(0.9568)">Try</span>
<span style="left:73.45px;top:299.30px;font:400 23.6px/29px 'Liberation Sans', sans-serif;color:#2b2b33;transform:scaleX(0.9544)">General Research Study</span>
<span style="left:342.40px;top:299.30px;font:400 23.6px/29px 'Liberation Sans', sans-serif;color:#58585c;transform:scaleX(1.0458)">v0</span>
<span style="left:443.21px;top:299.30px;font:400 23.6px/29px 'Liberation Sans', sans-serif;color:#2b2b33;transform:scaleX(0.9929)">Healthy Habits</span>
<span style="left:617.20px;top:299.30px;font:400 23.6px/29px 'Liberation Sans', sans-serif;color:#58585c;transform:scaleX(1.0458)">v0</span>
<span style="left:62.02px;top:390.90px;font:400 32px/39px 'Liberation Sans', sans-serif;color:#2b2b33;transform:scaleX(0.9919)"><b>Daily Pain</b> (<b>Daily Pain</b>)</span>
<span style="left:1343.88px;top:396.80px;font:400 22.8px/28px 'Liberation Sans', sans-serif;color:#2b2b33;transform:scaleX(0.9568)">Try</span>
<span style="left:73.45px;top:468.80px;font:400 23.6px/29px 'Liberation Sans', sans-serif;color:#2b2b33;transform:scaleX(0.9544)">General Research Study</span>
<span style="left:342.06px;top:468.80px;font:400 23.6px/29px 'Liberation Sans', sans-serif;letter-spacing:-1.000px;color:#58585c;transform:scaleX(0.9300)">v1</span>
<span style="left:407.31px;top:468.80px;font:400 23.6px/29px 'Liberation Sans', sans-serif;color:#2b2b33;transform:scaleX(0.9929)">Healthy Habits</span>
<span style="left:581.30px;top:468.80px;font:400 23.6px/29px 'Liberation Sans', sans-serif;color:#58585c;transform:scaleX(0.9972)">v2</span>
<span style="left:650.41px;top:468.80px;font:400 23.6px/29px 'Liberation Sans', sans-serif;color:#2b2b33;transform:scaleX(0.9905)">Sleep Study- Production</span>
<span style="left:923.40px;top:468.80px;font:400 23.6px/29px 'Liberation Sans', sans-serif;color:#58585c;transform:scaleX(1.0167)">v3</span>
<span style="left:61.58px;top:560.30px;font:400 32px/39px 'Liberation Sans', sans-serif;color:#2b2b33;transform:scaleX(1.0098)"><b>Demo Survey</b> (<b>Demo Survey</b>)</span>
<span style="left:61.90px;top:670.30px;font:400 32px/39px 'Liberation Sans', sans-serif;color:#2b2b33;transform:scaleX(1.0003)"><b>EHR Connect Survey</b> (<b>EHR Connect Survey</b>)</span>
<span style="left:1343.88px;top:675.80px;font:400 22.8px/28px 'Liberation Sans', sans-serif;color:#2b2b33;transform:scaleX(0.9568)">Try</span>
<span style="left:73.43px;top:747.80px;font:400 23.6px/29px 'Liberation Sans', sans-serif;color:#2b2b33;transform:scaleX(0.9740)">Sleep Study- Dry Run</span>
<span style="left:316.60px;top:747.80px;font:400 23.6px/29px 'Liberation Sans', sans-serif;color:#58585c;transform:scaleX(1.0167)">v3</span>
<span style="left:385.81px;top:747.80px;font:400 23.6px/29px 'Liberation Sans', sans-serif;color:#2b2b33;transform:scaleX(0.9905)">Sleep Study- Production</span>
<span style="left:658.80px;top:747.80px;font:400 23.6px/29px 'Liberation Sans', sans-serif;color:#58585c;transform:scaleX(1.0167)">v3</span>
<span style="left:729.40px;top:747.80px;font:400 23.6px/29px 'Liberation Sans', sans-serif;color:#2b2b33;transform:scaleX(0.9580)">Wellness Study</span>
<span style="left:907.00px;top:747.80px;font:400 23.6px/29px 'Liberation Sans', sans-serif;color:#58585c;transform:scaleX(1.0167)">v3</span>
<span style="left:61.89px;top:839.30px;font:400 32px/39px 'Liberation Sans', sans-serif;color:#2b2b33;transform:scaleX(1.0049)"><b>Eligibility Screening</b> (<b>Eligibility Screening</b>)</span>
<span style="left:1343.88px;top:844.80px;font:400 22.8px/28px 'Liberation Sans', sans-serif;color:#2b2b33;transform:scaleX(0.9568)">Try</span>
<span style="left:74.40px;top:916.80px;font:400 23.6px/29px 'Liberation Sans', sans-serif;color:#2b2b33;transform:scaleX(0.9580)">Wellness Study</span>
<span style="left:252.00px;top:916.80px;font:400 23.6px/29px 'Liberation Sans', sans-serif;color:#58585c;transform:scaleX(1.0458)">v0</span>
<span style="left:61.99px;top:994.50px;font:400 32px/39px 'Liberation Sans', sans-serif;color:#2b2b33;transform:scaleX(1.0033)"><b>EMA</b> (<b>Daily Feeling Survey</b>)</span>
<span style="left:1343.88px;top:1016.80px;font:400 22.8px/28px 'Liberation Sans', sans-serif;color:#2b2b33;transform:scaleX(0.9568)">Try</span>
<span style="left:62.46px;top:1037.60px;font:400 22.6px/28px 'Liberation Sans', sans-serif;color:#626266;transform:scaleX(1.0143)">This brief survey will ask you about how you're feeling today.</span>
<span style="left:73.41px;top:1091.30px;font:400 23.6px/29px 'Liberation Sans', sans-serif;color:#2b2b33;transform:scaleX(0.9905)">Sleep Study- Production</span>
<span style="left:346.40px;top:1091.30px;font:400 23.6px/29px 'Liberation Sans', sans-serif;color:#58585c;transform:scaleX(1.0500)">v9</span>
</body></html>
